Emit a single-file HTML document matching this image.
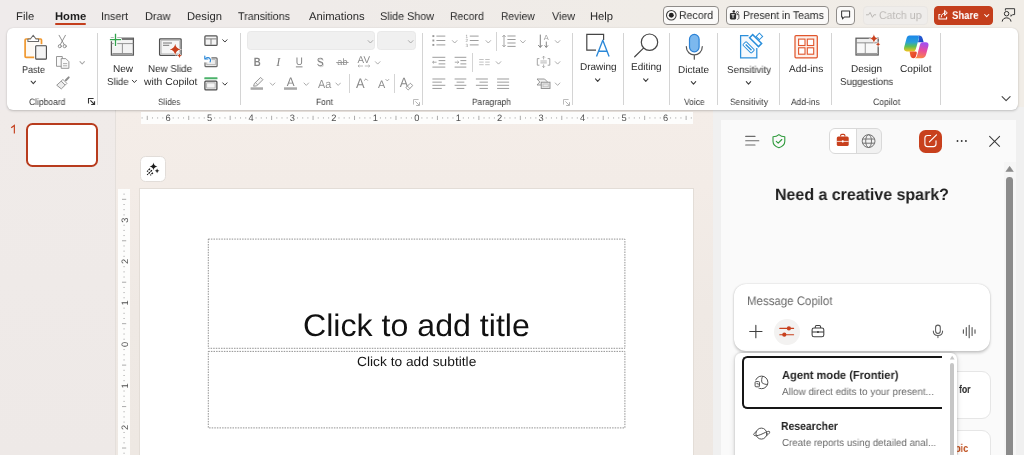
<!DOCTYPE html>
<html>
<head>
<meta charset="utf-8">
<title>PowerPoint</title>
<style>
*{box-sizing:border-box;margin:0;padding:0}
html,body{width:1024px;height:455px;overflow:hidden}
body{font-family:"Liberation Sans",sans-serif;color:#242424;position:relative;
 background:linear-gradient(90deg,#efebeb 0%,#efebe9 30%,#f0ece7 65%,#f1ede7 100%);}
.a{position:absolute}
.t{position:absolute;white-space:nowrap;line-height:1;transform-origin:0 0;will-change:transform;text-rendering:geometricPrecision}
svg text{text-rendering:geometricPrecision}
.sep{position:absolute;width:1px;background:#d6d6d6}
svg{position:absolute;overflow:visible;will-change:transform}
.btn{position:absolute;top:5.5px;height:19.5px;border:1px solid #8f8c89;border-radius:4px;background:#fbfaf9}
</style>
</head>
<body>

<!-- left pane tint + divider -->
<div class="a" style="left:0;top:110px;width:115px;height:345px;background:linear-gradient(180deg,#f0ebe9,#eee9e7)"></div>
<div class="a" style="left:115px;top:110px;width:909px;height:345px;background:linear-gradient(180deg,#f4ede8 0%,#f3ece7 22%,#efe9e4 58%,#eee8e3 100%)"></div>
<div class="a" style="left:115px;top:110px;width:1px;height:345px;background:#e4dfdb"></div>
<!-- task pane gutter -->
<div class="a" style="left:712.5px;top:107px;width:312px;height:348px;background:#f0f0f0"></div>
<!-- home underline -->
<div class="a" style="left:54.8px;top:23.4px;width:31px;height:1.8px;background:#c43e1c;border-radius:1px"></div>
<!-- title-bar buttons -->
<div class="btn" style="left:662.7px;width:56px"></div>
<div class="btn" style="left:725.8px;width:103.2px"></div>
<div class="btn" style="left:835.7px;width:19.6px"></div>
<div class="btn" style="left:862.5px;width:65px;border-color:#e9e6e3;background:#efedeb"></div>
<div class="btn" style="left:934.4px;width:58.6px;border-color:#c43e1c;background:#c43e1c"></div>

<div class="a" style="left:6.5px;top:28px;width:1011.7px;height:82px;background:#fff;border-radius:6px;box-shadow:0 1px 2.5px rgba(0,0,0,.20),0 0 1px rgba(0,0,0,.12)"></div>
<div class="a" style="left:247.2px;top:31.2px;width:128px;height:19.3px;background:#f0f0f0;border:1px solid #e9e9e9;border-radius:3.5px"></div>
<div class="a" style="left:377.3px;top:31.2px;width:38.4px;height:19.3px;background:#f0f0f0;border:1px solid #e9e9e9;border-radius:3.5px"></div>
<div class="sep" style="left:97.2px;top:32.5px;height:72.0px;background:#d4d4d4"></div>
<div class="sep" style="left:239.5px;top:32.5px;height:72.0px;background:#d4d4d4"></div>
<div class="sep" style="left:421.8px;top:32.5px;height:72.0px;background:#d4d4d4"></div>
<div class="sep" style="left:572.1px;top:32.5px;height:72.0px;background:#d4d4d4"></div>
<div class="sep" style="left:623.2px;top:32.5px;height:72.0px;background:#d4d4d4"></div>
<div class="sep" style="left:668.9px;top:32.5px;height:72.0px;background:#d4d4d4"></div>
<div class="sep" style="left:717.2px;top:32.5px;height:72.0px;background:#d4d4d4"></div>
<div class="sep" style="left:778.8px;top:32.5px;height:72.0px;background:#d4d4d4"></div>
<div class="sep" style="left:830.8px;top:32.5px;height:72.0px;background:#d4d4d4"></div>
<div class="sep" style="left:939.8px;top:32.5px;height:72.0px;background:#d4d4d4"></div>
<div class="sep" style="left:349.1px;top:74.2px;height:19.0px;background:#d4d4d4"></div>
<div class="sep" style="left:394.0px;top:74.2px;height:19.0px;background:#d4d4d4"></div>
<div class="sep" style="left:496.2px;top:31.5px;height:19.1px;background:#d4d4d4"></div>
<div class="sep" style="left:472.0px;top:52.8px;height:19.0px;background:#d4d4d4"></div>
<svg style="left:88.2px;top:98.3px" width="1" height="1"><path d="M0.5 5.6 V0.5 H5.6" fill="none" stroke="#333" stroke-width="1.08"/><path d="M2.4 2.4 L6.3 6.3 M6.5 3.2 V6.5 H3.2" fill="none" stroke="#333" stroke-width="1.2"/></svg>
<svg style="left:413px;top:98.5px" width="1" height="1"><path d="M0.5 5.6 V0.5 H5.6" fill="none" stroke="#b4b4b4" stroke-width="0.9"/><path d="M2.4 2.4 L6.3 6.3 M6.5 3.2 V6.5 H3.2" fill="none" stroke="#b4b4b4" stroke-width="1.0"/></svg>
<svg style="left:563px;top:98.5px" width="1" height="1"><path d="M0.5 5.6 V0.5 H5.6" fill="none" stroke="#b4b4b4" stroke-width="0.9"/><path d="M2.4 2.4 L6.3 6.3 M6.5 3.2 V6.5 H3.2" fill="none" stroke="#b4b4b4" stroke-width="1.0"/></svg>
<svg style="left:0;top:0" width="1024" height="112" viewBox="0 0 1024 112" font-family="Liberation Sans, sans-serif">
<g>
<rect x="25.1" y="39" width="16.4" height="18.4" rx="0.9" fill="#fdf9f4" stroke="#f0982f" stroke-width="1.7"/>
<path d="M27.9 41.4 V39 H30.4 L33.2 35.2 L36 39 H38.6 V41.4 Z" fill="#fff" stroke="#6a6a6a" stroke-width="1.05" stroke-linejoin="round"/>
<rect x="34.2" y="44.2" width="13.8" height="16.4" fill="#fff"/>
<rect x="35.7" y="45.8" width="10.7" height="13.3" rx="0.7" fill="#f4f4f4" stroke="#444" stroke-width="1.05"/>
</g>
<g fill="none" stroke="#8c8c8c" stroke-width="0.95" stroke-linecap="round">
<path d="M59.1 35.3 L64.3 44.8 M65.4 35.3 L60.2 44.8"/>
<circle cx="59.8" cy="46.2" r="1.55"/><circle cx="64.7" cy="46.2" r="1.55"/>
</g>
<g fill="#fafafa" stroke="#8c8c8c" stroke-width="0.9" stroke-linejoin="round">
<path d="M56.5 56.5 H62.3 V66.3 H56.5 Z"/>
<path d="M61.2 58.6 H65.8 L68.9 61.7 V68.3 H61.2 Z"/>
<path d="M63 63.6 H67.2 M63 65.8 H67.2" fill="none" stroke-width="0.7"/>
</g>
<g stroke="#8c8c8c" stroke-width="0.9" stroke-linejoin="round" fill="#ededed">
<path d="M68.7 77.4 L65.9 80.2" stroke-width="2" stroke-linecap="round"/>
<path d="M62.9 79.4 L66.9 83.4 L65.2 85.1 L61.2 81.1 Z" fill="#fff"/>
<path d="M61.2 81.1 L65.2 85.1 L61.3 88.9 L56.7 85.2 Z"/>
</g>
<g>
<rect x="111.4" y="38.2" width="22" height="16.9" fill="#f3f3f3" stroke="#5a5a5a" stroke-width="1.25"/>
<path d="M111.4 43.6 H133.4 M122.4 43.6 V53.4 M112.4 53.5 H132.4" fill="none" stroke="#8a8a8a" stroke-width="0.9"/>
<path d="M122 39.4 H133" fill="none" stroke="#6a6a6a" stroke-width="1"/>
<path d="M109.4 39.6 H121.6 M115.5 33.3 V46.4" fill="none" stroke="#fff" stroke-width="3.4"/>
<path d="M109.9 39.6 H121.1 M115.5 33.8 V45.9" fill="none" stroke="#31a24c" stroke-width="1.3"/>
</g>
<g>
<rect x="159.6" y="38.8" width="21.5" height="16.6" rx="0.8" fill="#f5f5f5" stroke="#505050" stroke-width="1.3"/>
<rect x="161.2" y="40.4" width="18.3" height="13.4" fill="none" stroke="#b5b5b5" stroke-width="0.7"/>
<path d="M163 43 H172 M163 45.3 H169.2" fill="none" stroke="#6a6a6a" stroke-width="0.9"/>
<path d="M175.20 42.50 Q176.03 48.57 182.10 49.40 Q176.03 50.23 175.20 56.30 Q174.37 50.23 168.30 49.40 Q174.37 48.57 175.20 42.50Z" fill="#fff"/>
<path d="M175.20 43.80 Q175.87 48.73 180.80 49.40 Q175.87 50.07 175.20 55.00 Q174.53 50.07 169.60 49.40 Q174.53 48.73 175.20 43.80Z" fill="#c8401d"/>
<path d="M179.50 52.30 Q179.90 55.20 182.80 55.60 Q179.90 56.00 179.50 58.90 Q179.10 56.00 176.20 55.60 Q179.10 55.20 179.50 52.30Z" fill="#fff"/>
<path d="M179.50 53.20 Q179.79 55.31 181.90 55.60 Q179.79 55.89 179.50 58.00 Q179.21 55.89 177.10 55.60 Q179.21 55.31 179.50 53.20Z" fill="#c8401d"/>
</g>
<g fill="none" stroke="#555" stroke-width="1.25">
<rect x="204.9" y="35.9" width="12.2" height="9.4" rx="0.9" fill="#f4f4f4"/>
<path d="M205.6 38.9 H216.4 M211 38.9 V44.7" stroke-width="0.9" stroke="#6f6f6f"/>
</g>
<g fill="none">
<rect x="205" y="57.8" width="12.1" height="8.8" rx="0.9" fill="#ededed" stroke="#6a6a6a" stroke-width="1.2"/>
<rect x="206.8" y="59.7" width="8.5" height="5" fill="none" stroke="#a5a5a5" stroke-width="0.7"/>
<path d="M203 55 H211.4 V62.4 H203 Z" fill="#fff" stroke="none"/>
<path d="M205.6 58.6 C207.2 56.9 209.8 57.2 210.4 59.6 C210.6 60.4 210.5 61.2 210.1 61.9" stroke="#2b88d8" stroke-width="1.15" stroke-linecap="round"/>
<path d="M204.8 56 V59 H207.8" stroke="#2b88d8" stroke-width="1.15" stroke-linecap="round" stroke-linejoin="round"/>
</g>
<g>
<rect x="204.3" y="77.3" width="13.2" height="1.9" rx="0.5" fill="#4cb26b"/>
<rect x="204.9" y="81.1" width="12" height="8.7" rx="0.9" fill="#f4f4f4" stroke="#4a4a4a" stroke-width="1.25"/>
<rect x="206.7" y="82.9" width="8.4" height="5.1" fill="none" stroke="#9a9a9a" stroke-width="0.7"/>
</g>
<g fill="#7f7f7f" text-anchor="middle">
<text x="257.2" y="65.6" font-size="12" font-weight="bold" fill="#858585" transform="translate(257.2 0) scale(0.8 1) translate(-257.2 0)">B</text>
<text x="278.2" y="65.6" font-size="12.4" font-style="italic" font-family="Liberation Serif, serif">I</text>
<text x="299.2" y="64.9" font-size="10.9" transform="translate(299.2 0) scale(0.9 1) translate(-299.2 0)">U</text>
<rect x="295.9" y="66.4" width="6.6" height="0.95"/>
<text x="320.9" y="66.5" font-size="12" fill="#d2d2d2" transform="translate(320.9 0) scale(0.85 1) translate(-320.9 0)">S</text>
<text x="320.2" y="65.7" font-size="12" transform="translate(320.2 0) scale(0.85 1) translate(-320.2 0)">S</text>
<text x="342.4" y="65.3" font-size="9.2" fill="#8f8f8f">ab</text>
<rect x="336.2" y="62" width="12.4" height="0.85" fill="#8f8f8f"/>
<text x="363.8" y="63" font-size="10" fill="#8a8a8a" textLength="12.4" lengthAdjust="spacingAndGlyphs">AV</text>
<path d="M358 66 H363 M359.4 64.8 L358 66 L359.4 67.2 M364.8 66 H369.8 M368.4 64.8 L369.8 66 L368.4 67.2" fill="none" stroke="#a0a0a0" stroke-width="0.7"/>
</g>
<g>
<path d="M260.6 77.4 L262.9 79.7 L256.7 85.9 L253.6 86.2 L254.3 83.6 Z" fill="#f6f6f6" stroke="#8c8c8c" stroke-width="0.9" stroke-linejoin="round"/>
<path d="M255.4 82.6 L257.7 84.9" stroke="#8c8c8c" stroke-width="0.8"/>
<rect x="250.6" y="87.3" width="12.4" height="2.5" fill="#a9a9a9"/>
</g>
<g>
<text x="290.75" y="86" font-size="12.3" text-anchor="middle" fill="#858585" transform="translate(290.75 0) scale(0.95 1) translate(-290.75 0)">A</text>
<rect x="284" y="87.3" width="13" height="2.5" fill="#a9a9a9"/>
<text x="324.65" y="87.9" font-size="11.8" text-anchor="middle" fill="#929292" textLength="13.2" lengthAdjust="spacingAndGlyphs">Aa</text>
<text x="360.2" y="87.9" font-size="13.9" text-anchor="middle" fill="#8a8a8a" transform="translate(360.2 0) scale(0.93 1) translate(-360.2 0)">A</text>
<path d="M364.2 80.6 L366 78.8 L367.8 80.6" fill="none" stroke="#8a8a8a" stroke-width="0.8"/>
<text x="381.6" y="87.9" font-size="10.8" text-anchor="middle" fill="#8a8a8a">A</text>
<path d="M385.6 79.2 L387.3 80.9 L389 79.2" fill="none" stroke="#8a8a8a" stroke-width="0.8"/>
<text x="404" y="87.1" font-size="13.5" text-anchor="middle" fill="#8a8a8a" transform="translate(404 0) scale(0.93 1) translate(-404 0)">A</text>
<g transform="rotate(-45 409.3 86.6)"><rect x="406.1" y="84.9" width="6.4" height="3.4" rx="0.6" fill="#fff" stroke="#8a8a8a" stroke-width="0.85"/><path d="M408.3 84.9 V88.3" stroke="#8a8a8a" stroke-width="0.7"/></g>
</g>
<g><rect x="432.4" y="35.15" width="1.9" height="1.9" fill="#979797"/><path d="M436.4 36.1 H445.3" stroke="#979797" stroke-width="0.95" fill="none"/><rect x="432.4" y="39.55" width="1.9" height="1.9" fill="#979797"/><path d="M436.4 40.5 H445.3" stroke="#979797" stroke-width="0.95" fill="none"/><rect x="432.4" y="43.949999999999996" width="1.9" height="1.9" fill="#979797"/><path d="M436.4 44.9 H445.3" stroke="#979797" stroke-width="0.95" fill="none"/><text x="466.9" y="37.7" font-size="4.6" text-anchor="middle" fill="#979797">1</text><path d="M469.8 36.1 H478.6" stroke="#979797" stroke-width="0.95" fill="none"/><text x="466.9" y="42.1" font-size="4.6" text-anchor="middle" fill="#979797">2</text><path d="M469.8 40.5 H478.6" stroke="#979797" stroke-width="0.95" fill="none"/><text x="466.9" y="46.5" font-size="4.6" text-anchor="middle" fill="#979797">3</text><path d="M469.8 44.9 H478.6" stroke="#979797" stroke-width="0.95" fill="none"/><path d="M507.4 36 H515.6" stroke="#979797" stroke-width="0.95" fill="none"/><path d="M507.4 39.5 H515.6" stroke="#979797" stroke-width="0.95" fill="none"/><path d="M507.4 43 H515.6" stroke="#979797" stroke-width="0.95" fill="none"/><path d="M507.4 46.4 H515.6" stroke="#979797" stroke-width="0.95" fill="none"/><path d="M504 35.2 V46.8 M502.4 37 L504 35.2 L505.6 37 M502.4 45 L504 46.8 L505.6 45" fill="none" stroke="#979797" stroke-width="0.85"/><path d="M540.3 34.6 V47.4 M538.2 45 L540.3 47.4 L542.4 45" fill="none" stroke="#7a7a7a" stroke-width="0.95"/><text x="546.3" y="40.4" font-size="7.4" text-anchor="middle" fill="#9a9a9a">A</text><path d="M546.3 41.6 V47.4 M544.5 45.4 L546.3 47.4 L548.1 45.4" fill="none" stroke="#7a7a7a" stroke-width="0.9"/><path d="M432.4 57.3 H445.3" stroke="#979797" stroke-width="0.95" fill="none"/><path d="M438.6 60.6 H445.3" stroke="#979797" stroke-width="0.95" fill="none"/><path d="M438.6 63.9 H445.3" stroke="#979797" stroke-width="0.95" fill="none"/><path d="M432.4 67.1 H445.3" stroke="#979797" stroke-width="0.95" fill="none"/><path d="M436.6 62.2 H432.6 M434 60.9 L432.6 62.2 L434 63.5" fill="none" stroke="#979797" stroke-width="0.8"/><path d="M454.6 57.3 H466.3" stroke="#979797" stroke-width="0.95" fill="none"/><path d="M460.4 60.6 H466.3" stroke="#979797" stroke-width="0.95" fill="none"/><path d="M460.4 63.9 H466.3" stroke="#979797" stroke-width="0.95" fill="none"/><path d="M454.6 67.1 H466.3" stroke="#979797" stroke-width="0.95" fill="none"/><path d="M454.8 62.2 H458.8 M457.4 60.9 L458.8 62.2 L457.4 63.5" fill="none" stroke="#979797" stroke-width="0.8"/><path d="M479.2 59.5 H483.7" stroke="#b2b2b2" stroke-width="0.8" fill="none"/><path d="M485.2 59.5 H489.7" stroke="#b2b2b2" stroke-width="0.8" fill="none"/><path d="M479.2 62.1 H483.7" stroke="#b2b2b2" stroke-width="0.8" fill="none"/><path d="M485.2 62.1 H489.7" stroke="#b2b2b2" stroke-width="0.8" fill="none"/><path d="M479.2 64.7 H483.7" stroke="#b2b2b2" stroke-width="0.8" fill="none"/><path d="M485.2 64.7 H489.7" stroke="#b2b2b2" stroke-width="0.8" fill="none"/><path d="M539.4 58.6 H537.3 V65.2 H539.4 M547.7 58.6 H549.8 V65.2 H547.7" fill="none" stroke="#9a9a9a" stroke-width="0.9"/><path d="M540.4 61 H546.8" stroke="#a5a5a5" stroke-width="0.8" fill="none"/><path d="M540.4 62.9 H546.8" stroke="#a5a5a5" stroke-width="0.8" fill="none"/><path d="M543.6 59.4 V56.3 M542.3 57.5 L543.6 56.2 L544.9 57.5 M543.6 64.4 V67.5 M542.3 66.3 L543.6 67.6 L544.9 66.3" fill="none" stroke="#9a9a9a" stroke-width="0.75"/><path d="M432.4 79 H445.3" stroke="#979797" stroke-width="0.95" fill="none"/><path d="M454.6 79 H466.3" stroke="#979797" stroke-width="0.95" fill="none"/><path d="M475.9 79 H487.9" stroke="#979797" stroke-width="0.95" fill="none"/><path d="M497.1 79 H509.1" stroke="#979797" stroke-width="0.95" fill="none"/><path d="M432.4 82.15 H441.8" stroke="#979797" stroke-width="0.95" fill="none"/><path d="M456.6 82.15 H464.3" stroke="#979797" stroke-width="0.95" fill="none"/><path d="M479.5 82.15 H487.9" stroke="#979797" stroke-width="0.95" fill="none"/><path d="M497.1 82.15 H509.1" stroke="#979797" stroke-width="0.95" fill="none"/><path d="M432.4 85.3 H445.3" stroke="#979797" stroke-width="0.95" fill="none"/><path d="M454.6 85.3 H466.3" stroke="#979797" stroke-width="0.95" fill="none"/><path d="M475.9 85.3 H487.9" stroke="#979797" stroke-width="0.95" fill="none"/><path d="M497.1 85.3 H509.1" stroke="#979797" stroke-width="0.95" fill="none"/><path d="M432.4 88.45 H441.8" stroke="#979797" stroke-width="0.95" fill="none"/><path d="M456.6 88.45 H464.3" stroke="#979797" stroke-width="0.95" fill="none"/><path d="M479.5 88.45 H487.9" stroke="#979797" stroke-width="0.95" fill="none"/><path d="M497.1 88.45 H509.1" stroke="#979797" stroke-width="0.95" fill="none"/><path d="M537 79 H544.6 L547.6 82 L544.6 85 H537 L539.8 82 Z" fill="#f0f0f0" stroke="#8a8a8a" stroke-width="0.85" stroke-linejoin="round"/><rect x="541.2" y="82.2" width="8.8" height="6.3" fill="#e9e9e9" stroke="#8a8a8a" stroke-width="0.9"/><rect x="543" y="84" width="5.2" height="2.8" fill="none" stroke="#b0b0b0" stroke-width="0.6"/></g>
</svg>
<svg style="left:0;top:0" width="1" height="1"><path d="M80.00 61.60 L82.20 64.00 L84.40 61.60" fill="none" stroke="#a8a8a8" stroke-width="1.1" stroke-linecap="round" stroke-linejoin="round"/></svg>
<svg style="left:0;top:0" width="1" height="1"><path d="M31.10 81.20 L33.30 83.60 L35.50 81.20" fill="none" stroke="#3d3d3d" stroke-width="1.05" stroke-linecap="round" stroke-linejoin="round"/></svg>
<svg style="left:0;top:0" width="1" height="1"><path d="M132.30 80.25 L134.40 82.55 L136.50 80.25" fill="none" stroke="#3d3d3d" stroke-width="1.0" stroke-linecap="round" stroke-linejoin="round"/></svg>
<svg style="left:0;top:0" width="1" height="1"><path d="M222.75 39.75 L224.90 42.05 L227.05 39.75" fill="none" stroke="#3d3d3d" stroke-width="1.0" stroke-linecap="round" stroke-linejoin="round"/></svg>
<svg style="left:0;top:0" width="1" height="1"><path d="M222.75 82.85 L224.90 85.15 L227.05 82.85" fill="none" stroke="#3d3d3d" stroke-width="1.0" stroke-linecap="round" stroke-linejoin="round"/></svg>
<svg style="left:0;top:0" width="1" height="1"><path d="M368.10 40.60 L370.40 43.00 L372.70 40.60" fill="none" stroke="#9e9e9e" stroke-width="0.85" stroke-linecap="round" stroke-linejoin="round"/></svg>
<svg style="left:0;top:0" width="1" height="1"><path d="M408.40 40.60 L410.70 43.00 L413.00 40.60" fill="none" stroke="#9e9e9e" stroke-width="0.85" stroke-linecap="round" stroke-linejoin="round"/></svg>
<svg style="left:0;top:0" width="1" height="1"><path d="M375.40 61.70 L377.70 64.10 L380.00 61.70" fill="none" stroke="#9e9e9e" stroke-width="0.85" stroke-linecap="round" stroke-linejoin="round"/></svg>
<svg style="left:0;top:0" width="1" height="1"><path d="M270.30 83.00 L272.60 85.40 L274.90 83.00" fill="none" stroke="#9e9e9e" stroke-width="0.85" stroke-linecap="round" stroke-linejoin="round"/></svg>
<svg style="left:0;top:0" width="1" height="1"><path d="M304.00 83.00 L306.30 85.40 L308.60 83.00" fill="none" stroke="#9e9e9e" stroke-width="0.85" stroke-linecap="round" stroke-linejoin="round"/></svg>
<svg style="left:0;top:0" width="1" height="1"><path d="M335.90 83.00 L338.20 85.40 L340.50 83.00" fill="none" stroke="#9e9e9e" stroke-width="0.85" stroke-linecap="round" stroke-linejoin="round"/></svg>
<svg style="left:0;top:0" width="1" height="1"><path d="M452.40 40.60 L454.70 43.00 L457.00 40.60" fill="none" stroke="#9e9e9e" stroke-width="0.85" stroke-linecap="round" stroke-linejoin="round"/></svg>
<svg style="left:0;top:0" width="1" height="1"><path d="M486.00 40.60 L488.30 43.00 L490.60 40.60" fill="none" stroke="#9e9e9e" stroke-width="0.85" stroke-linecap="round" stroke-linejoin="round"/></svg>
<svg style="left:0;top:0" width="1" height="1"><path d="M520.60 40.60 L522.90 43.00 L525.20 40.60" fill="none" stroke="#9e9e9e" stroke-width="0.85" stroke-linecap="round" stroke-linejoin="round"/></svg>
<svg style="left:0;top:0" width="1" height="1"><path d="M555.30 40.60 L557.60 43.00 L559.90 40.60" fill="none" stroke="#9e9e9e" stroke-width="0.85" stroke-linecap="round" stroke-linejoin="round"/></svg>
<svg style="left:0;top:0" width="1" height="1"><path d="M496.20 61.70 L498.50 64.10 L500.80 61.70" fill="none" stroke="#9e9e9e" stroke-width="0.85" stroke-linecap="round" stroke-linejoin="round"/></svg>
<svg style="left:0;top:0" width="1" height="1"><path d="M555.30 61.70 L557.60 64.10 L559.90 61.70" fill="none" stroke="#9e9e9e" stroke-width="0.85" stroke-linecap="round" stroke-linejoin="round"/></svg>
<svg style="left:0;top:0" width="1" height="1"><path d="M555.30 83.00 L557.60 85.40 L559.90 83.00" fill="none" stroke="#9e9e9e" stroke-width="0.85" stroke-linecap="round" stroke-linejoin="round"/></svg>
<svg style="left:0;top:0" width="1024" height="112" viewBox="0 0 1024 112" font-family="Liberation Sans, sans-serif">
<defs>
<linearGradient id="cpL" x1="0" y1="0" x2="0" y2="1"><stop offset="0" stop-color="#1b86ea"/><stop offset="0.42" stop-color="#29a0d8"/><stop offset="0.68" stop-color="#5bbf56"/><stop offset="1" stop-color="#f6c51c"/></linearGradient>
<linearGradient id="cpR" x1="0.3" y1="0" x2="0.1" y2="1"><stop offset="0" stop-color="#a44fee"/><stop offset="0.45" stop-color="#e84c9c"/><stop offset="1" stop-color="#fd8e3a"/></linearGradient>
<linearGradient id="cpB" x1="0" y1="0" x2="1" y2="1"><stop offset="0" stop-color="#2a6fe0"/><stop offset="1" stop-color="#1a3fc0"/></linearGradient>
<linearGradient id="cpO" x1="0" y1="0" x2="1" y2="1"><stop offset="0" stop-color="#f0662c"/><stop offset="1" stop-color="#e3372c"/></linearGradient>
</defs>
<g fill="none">
<path d="M596 50.1 H586.8 V34.3 H603.6 V40" stroke="#454545" stroke-width="1.2"/>
<path d="M596.5 56.4 L602.8 40.2 L609.1 56.4 M598.5 51.2 H607.1" stroke="#2b88d8" stroke-width="1.35" stroke-linejoin="round"/>
</g>
<g fill="none" stroke="#454545" stroke-width="1.2" stroke-linecap="round">
<circle cx="649.5" cy="42.2" r="8.2"/><path d="M643.5 48.1 L634.7 56.8"/>
</g>
<g fill="none">
<rect x="689.5" y="34.4" width="9.6" height="17.4" rx="4.8" fill="#7cb8ee" stroke="#2b82d6" stroke-width="1.2"/>
<path d="M686.3 46.6 C686.3 57.6 702.3 57.6 702.3 46.6 M694.3 55 V59.2" stroke="#555" stroke-width="1.2" stroke-linecap="round"/>
</g>
<g fill="none" stroke="#2b8fdb">
<path d="M748.5 35.6 H740.6 V57.8 H756.8 V48" stroke-width="1.25" fill="#f5f9fd"/>
<g transform="rotate(45 748.6 47.4)"><rect x="742.6" y="45" width="12" height="4.8" rx="0.9" fill="#fff" stroke-width="0.95"/><rect x="744.5" y="46.7" width="8.2" height="1.4" fill="#2b8fdb" stroke="none"/></g>
<g transform="rotate(45 755.6 40.6)"><rect x="749.3" y="38.4" width="12.6" height="4.4" fill="#fff" stroke-width="1.5"/></g>
<g transform="rotate(45 759.4 36.4)"><rect x="757.1" y="34.1" width="4.6" height="4.6" fill="#fff" stroke-width="1.0"/></g>
</g>
<g stroke="#e1562c" stroke-width="1.1">
<rect x="795" y="35.5" width="22.3" height="22.3" rx="1" fill="#fdf1ec" stroke-width="1.25"/>
<rect x="798.6" y="39.1" width="6.4" height="6.4" fill="#fff"/><rect x="807.3" y="39.1" width="6.4" height="6.4" fill="#fff"/>
<rect x="798.6" y="47.8" width="6.4" height="6.4" fill="#fff"/><rect x="807.3" y="47.8" width="6.4" height="6.4" fill="#fff"/>
</g>
<g>
<rect x="856" y="38.2" width="22.2" height="16.8" fill="#efefef" stroke="#5c5c5c" stroke-width="1.25"/>
<path d="M856 42.8 H878 M865.2 42.8 V53.6 M857 53.6 H877" fill="none" stroke="#8a8a8a" stroke-width="0.9"/>
<path d="M857.3 44 H864.4 V52.8 H857.3Z M866 44 H877 V52.8 H866Z" fill="#f8f8f8" stroke="none"/>
<path d="M873.90 33.00 Q874.57 37.93 879.50 38.60 Q874.57 39.27 873.90 44.20 Q873.23 39.27 868.30 38.60 Q873.23 37.93 873.90 33.00Z" fill="#fff"/><path d="M873.90 34.20 Q874.43 38.07 878.30 38.60 Q874.43 39.13 873.90 43.00 Q873.37 39.13 869.50 38.60 Q873.37 38.07 873.90 34.20Z" fill="#c8401d"/>
<path d="M878.10 41.20 Q878.47 43.93 881.20 44.30 Q878.47 44.67 878.10 47.40 Q877.73 44.67 875.00 44.30 Q877.73 43.93 878.10 41.20Z" fill="#fff"/><path d="M878.10 42.10 Q878.36 44.04 880.30 44.30 Q878.36 44.56 878.10 46.50 Q877.84 44.56 875.90 44.30 Q877.84 44.04 878.10 42.10Z" fill="#c8401d"/>
</g>
<g>
<path d="M915 35.5 H919.2 C920.9 35.5 922 36.5 922.5 38.2 L923.7 42.3 H918 L918.9 38.4 C919.3 36.5 918.5 35.5 916.8 35.5 Z" fill="url(#cpB)"/>
<path d="M909.4 35.5 H916.8 C918.6 35.5 919.3 36.6 918.8 38.4 L916 48.4 C915.4 50.6 914.2 51.5 912.2 51.5 H906.8 C904.5 51.5 903.5 49.9 904.1 47.6 L906.5 38.4 C907 36.5 908 35.5 909.4 35.5 Z" fill="url(#cpL)"/>
<path d="M909.6 51.5 H915.4 C916.6 51.5 917 52.2 916.7 53.4 L916 56 C915.6 57.5 914.6 58.2 913.4 58.2 C911.8 58.2 910.8 57.4 910.4 55.8 Z" fill="url(#cpO)"/>
<path d="M922.4 42.2 H925.8 C928 42.2 929 43.8 928.4 46 L926 54.8 C925.4 57.1 923.9 58.2 921.6 58.2 H914 C915.7 58.2 916.6 57.3 917.1 55.4 L919.9 45 C920.4 43.1 921.2 42.2 922.4 42.2 Z" fill="url(#cpR)"/>
</g>
<path d="M1002.1 96.7 L1006.1 100.7 L1010.1 96.7" fill="none" stroke="#444" stroke-width="1.1" stroke-linecap="round" stroke-linejoin="round"/>
<g fill="none">
<circle cx="671.3" cy="15.2" r="4.8" stroke="#3a3a3a" stroke-width="1.05"/><circle cx="671.3" cy="15.2" r="2.45" fill="#222"/>
<!-- teams -->
<rect x="729.9" y="13" width="6.2" height="6.4" rx="1.1" fill="#2d2d2d"/>
<path d="M731.4 14.7 H734.6 M733 14.7 V18.1" stroke="#fff" stroke-width="0.9"/>
<circle cx="733.8" cy="11.6" r="1.25" fill="#2d2d2d"/>
<circle cx="737.5" cy="12.5" r="1.05" stroke="#3a3a3a" stroke-width="0.8"/>
<path d="M736.6 14.6 H738.9 V17.8 C738.9 18.8 738.1 19.4 737.2 19.4" stroke="#3a3a3a" stroke-width="0.85"/>
<!-- comment -->
<path d="M841.6 11 H849.6 V17 H844.4 L842.5 18.9 V17 H841.6 Z" stroke="#3a3a3a" stroke-width="1.05" stroke-linejoin="round"/>
<!-- pulse -->
<path d="M866.4 14.8 H868.6 L870.1 12.4 L872.4 17.3 L873.9 14.8 H875.7" stroke="#b9b6b3" stroke-width="0.95" stroke-linejoin="round" stroke-linecap="round"/>
<!-- share -->
<path d="M940.4 14.4 H938.9 V19 H946.6 V16.8" stroke="#fff" stroke-width="1.05" stroke-linejoin="round"/>
<path d="M941.2 17 C941.4 14.4 943 13 945.3 12.9 M944.9 10.6 L947.3 12.9 L944.9 15.2 Z" stroke="#fff" stroke-width="1" stroke-linejoin="round" stroke-linecap="round"/>
<path d="M984.6 14.5 L986.7 16.6 L988.8 14.5" stroke="#fff" stroke-width="1.05" stroke-linecap="round" stroke-linejoin="round"/>
<!-- person w/ bubble -->
<path d="M1005.4 10.6 V8.7 H1014.6 V14.6 H1012.6 L1011 16.3 V14.6" stroke="#3a3a3a" stroke-width="1" stroke-linejoin="round"/>
<circle cx="1006.6" cy="13.7" r="2.25" stroke="#2d2d2d" stroke-width="1" fill="#f1ede8"/>
<path d="M1002.2 21.6 C1002.4 16.6 1010.8 16.6 1011 21.6" stroke="#2d2d2d" stroke-width="1"/>
</g>
</svg>
<svg style="left:0;top:0" width="1" height="1"><path d="M595.50 78.90 L597.70 81.30 L599.90 78.90" fill="none" stroke="#3d3d3d" stroke-width="1.1" stroke-linecap="round" stroke-linejoin="round"/></svg>
<svg style="left:0;top:0" width="1" height="1"><path d="M643.60 78.90 L645.80 81.30 L648.00 78.90" fill="none" stroke="#3d3d3d" stroke-width="1.1" stroke-linecap="round" stroke-linejoin="round"/></svg>
<svg style="left:0;top:0" width="1" height="1"><path d="M691.30 81.70 L693.50 84.10 L695.70 81.70" fill="none" stroke="#3d3d3d" stroke-width="1.1" stroke-linecap="round" stroke-linejoin="round"/></svg>
<svg style="left:0;top:0" width="1" height="1"><path d="M746.30 81.70 L748.50 84.10 L750.70 81.70" fill="none" stroke="#3d3d3d" stroke-width="1.1" stroke-linecap="round" stroke-linejoin="round"/></svg>

<!-- thumbnail -->
<div class="a" style="left:26.1px;top:123px;width:72.4px;height:44.1px;border:2.8px solid #b83c1e;border-radius:6.5px;background:#fff"></div>
<svg style="left:0;top:0" width="1" height="1"><path d="M11.2 127.8 L14.35 125.5 V133.6" fill="none" stroke="#c43e1c" stroke-width="1.15" stroke-linejoin="miter"/></svg>
<!-- rulers -->
<div class="a" style="left:140.6px;top:112px;width:552.4px;height:12px;background:#fdfdfc"></div>
<div class="a" style="left:117.7px;top:188.6px;width:12.4px;height:267px;background:#fdfdfc"></div>
<!-- designer button -->
<div class="a" style="left:140.4px;top:156.4px;width:25.3px;height:25.3px;background:#fff;border:1px solid #e2ddd9;border-radius:5.5px"></div>
<!-- slide -->
<div class="a" style="left:139.3px;top:187.8px;width:554.7px;height:270px;background:#fff;border:1px solid #e3ddd7"></div>
<svg style="left:0;top:0" width="1" height="1"><rect x="208.3" y="239.1" width="416.6" height="109.2" fill="none" stroke="#7e7e7e" stroke-width="0.85" stroke-dasharray="1.5 1.1"/><rect x="208.3" y="351.4" width="416.6" height="76.5" fill="none" stroke="#7e7e7e" stroke-width="0.85" stroke-dasharray="1.5 1.1"/></svg>
<svg style="left:0;top:0" width="1024" height="455" viewBox="0 0 1024 455" font-family="Liberation Sans, sans-serif">
<path d="M147.27 115.8 V120 M188.72 115.8 V120 M230.17 115.8 V120 M271.62 115.8 V120 M313.07 115.8 V120 M354.52 115.8 V120 M395.97 115.8 V120 M437.43 115.8 V120 M478.88 115.8 V120 M520.33 115.8 V120 M561.77 115.8 V120 M603.23 115.8 V120 M644.67 115.8 V120 M686.12 115.8 V120 " stroke="#a2a2a2" stroke-width="0.9" fill="none"/><path d="M142.09 117 V118.8 M152.46 117 V118.8 M157.64 117 V118.8 M162.82 117 V118.8 M173.18 117 V118.8 M178.36 117 V118.8 M183.54 117 V118.8 M193.91 117 V118.8 M199.09 117 V118.8 M204.27 117 V118.8 M214.63 117 V118.8 M219.81 117 V118.8 M224.99 117 V118.8 M235.36 117 V118.8 M240.54 117 V118.8 M245.72 117 V118.8 M256.08 117 V118.8 M261.26 117 V118.8 M266.44 117 V118.8 M276.81 117 V118.8 M281.99 117 V118.8 M287.17 117 V118.8 M297.53 117 V118.8 M302.71 117 V118.8 M307.89 117 V118.8 M318.26 117 V118.8 M323.44 117 V118.8 M328.62 117 V118.8 M338.98 117 V118.8 M344.16 117 V118.8 M349.34 117 V118.8 M359.71 117 V118.8 M364.89 117 V118.8 M370.07 117 V118.8 M380.43 117 V118.8 M385.61 117 V118.8 M390.79 117 V118.8 M401.16 117 V118.8 M406.34 117 V118.8 M411.52 117 V118.8 M421.88 117 V118.8 M427.06 117 V118.8 M432.24 117 V118.8 M442.61 117 V118.8 M447.79 117 V118.8 M452.97 117 V118.8 M463.33 117 V118.8 M468.51 117 V118.8 M473.69 117 V118.8 M484.06 117 V118.8 M489.24 117 V118.8 M494.42 117 V118.8 M504.78 117 V118.8 M509.96 117 V118.8 M515.14 117 V118.8 M525.51 117 V118.8 M530.69 117 V118.8 M535.87 117 V118.8 M546.23 117 V118.8 M551.41 117 V118.8 M556.59 117 V118.8 M566.96 117 V118.8 M572.14 117 V118.8 M577.32 117 V118.8 M587.68 117 V118.8 M592.86 117 V118.8 M598.04 117 V118.8 M608.41 117 V118.8 M613.59 117 V118.8 M618.77 117 V118.8 M629.13 117 V118.8 M634.31 117 V118.8 M639.49 117 V118.8 M649.86 117 V118.8 M655.04 117 V118.8 M660.22 117 V118.8 M670.58 117 V118.8 M675.76 117 V118.8 M680.94 117 V118.8 M691.31 117 V118.8 " stroke="#c2c2c2" stroke-width="0.9" fill="none"/><text x="168.10" y="121.3" font-size="9.3" text-anchor="middle" fill="#505050">6</text><text x="209.55" y="121.3" font-size="9.3" text-anchor="middle" fill="#505050">5</text><text x="251.00" y="121.3" font-size="9.3" text-anchor="middle" fill="#505050">4</text><text x="292.45" y="121.3" font-size="9.3" text-anchor="middle" fill="#505050">3</text><text x="333.90" y="121.3" font-size="9.3" text-anchor="middle" fill="#505050">2</text><text x="375.35" y="121.3" font-size="9.3" text-anchor="middle" fill="#505050">1</text><text x="416.80" y="121.3" font-size="9.3" text-anchor="middle" fill="#505050">0</text><text x="458.25" y="121.3" font-size="9.3" text-anchor="middle" fill="#505050">1</text><text x="499.70" y="121.3" font-size="9.3" text-anchor="middle" fill="#505050">2</text><text x="541.15" y="121.3" font-size="9.3" text-anchor="middle" fill="#505050">3</text><text x="582.60" y="121.3" font-size="9.3" text-anchor="middle" fill="#505050">4</text><text x="624.05" y="121.3" font-size="9.3" text-anchor="middle" fill="#505050">5</text><text x="665.50" y="121.3" font-size="9.3" text-anchor="middle" fill="#505050">6</text>
<path d="M122 199.32 H126.2 M122 240.77 H126.2 M122 282.22 H126.2 M122 323.67 H126.2 M122 365.12 H126.2 M122 406.57 H126.2 M122 448.02 H126.2 " stroke="#a2a2a2" stroke-width="0.9" fill="none"/><path d="M123.2 194.14 H125 M123.2 204.51 H125 M123.2 209.69 H125 M123.2 214.87 H125 M123.2 225.23 H125 M123.2 230.41 H125 M123.2 235.59 H125 M123.2 245.96 H125 M123.2 251.14 H125 M123.2 256.32 H125 M123.2 266.68 H125 M123.2 271.86 H125 M123.2 277.04 H125 M123.2 287.41 H125 M123.2 292.59 H125 M123.2 297.77 H125 M123.2 308.13 H125 M123.2 313.31 H125 M123.2 318.49 H125 M123.2 328.86 H125 M123.2 334.04 H125 M123.2 339.22 H125 M123.2 349.58 H125 M123.2 354.76 H125 M123.2 359.94 H125 M123.2 370.31 H125 M123.2 375.49 H125 M123.2 380.67 H125 M123.2 391.03 H125 M123.2 396.21 H125 M123.2 401.39 H125 M123.2 411.76 H125 M123.2 416.94 H125 M123.2 422.12 H125 M123.2 432.48 H125 M123.2 437.66 H125 M123.2 442.84 H125 M123.2 453.21 H125 " stroke="#c2c2c2" stroke-width="0.9" fill="none"/><text transform="translate(127.8 220.05) rotate(-90)" font-size="9.3" text-anchor="middle" fill="#505050">3</text><text transform="translate(127.8 261.50) rotate(-90)" font-size="9.3" text-anchor="middle" fill="#505050">2</text><text transform="translate(127.8 302.95) rotate(-90)" font-size="9.3" text-anchor="middle" fill="#505050">1</text><text transform="translate(127.8 344.40) rotate(-90)" font-size="9.3" text-anchor="middle" fill="#505050">0</text><text transform="translate(127.8 385.85) rotate(-90)" font-size="9.3" text-anchor="middle" fill="#505050">1</text><text transform="translate(127.8 427.30) rotate(-90)" font-size="9.3" text-anchor="middle" fill="#505050">2</text>
<path d="M153.50 162.50 Q153.89 166.01 157.40 166.40 Q153.89 166.79 153.50 170.30 Q153.11 166.79 149.60 166.40 Q153.11 166.01 153.50 162.50Z" fill="#1a1a1a"/><path d="M157.10 168.40 Q157.34 170.56 159.50 170.80 Q157.34 171.04 157.10 173.20 Q156.86 171.04 154.70 170.80 Q156.86 170.56 157.10 168.40Z" fill="#1a1a1a"/><path d="M150 168.6 L147.1 171.6 M151.9 170.2 L147.2 174.9 M152.9 172.7 L150.3 175.3" stroke="#111" stroke-width="1.3" stroke-dasharray="2 0.8" fill="none"/>
</svg>
<div class="t" style="left:16.48px;top:12.09px;font-size:11.24px;color:#2a2a2a;transform:scaleX(1.0031);">File</div>
<div class="t" style="left:101.06px;top:12.09px;font-size:11.24px;color:#2a2a2a;transform:scaleX(0.9621);">Insert</div>
<div class="t" style="left:145.10px;top:12.09px;font-size:11.24px;color:#2a2a2a;transform:scaleX(0.9759);">Draw</div>
<div class="t" style="left:186.58px;top:12.09px;font-size:11.24px;color:#2a2a2a;transform:scaleX(0.9973);">Design</div>
<div class="t" style="left:238.02px;top:12.09px;font-size:11.24px;color:#2a2a2a;transform:scaleX(0.9511);">Transitions</div>
<div class="t" style="left:308.50px;top:12.09px;font-size:11.24px;color:#2a2a2a;transform:scaleX(0.9928);">Animations</div>
<div class="t" style="left:379.72px;top:12.09px;font-size:11.24px;color:#2a2a2a;transform:scaleX(0.9645);">Slide Show</div>
<div class="t" style="left:450.17px;top:12.09px;font-size:11.24px;color:#2a2a2a;transform:scaleX(0.9336);">Record</div>
<div class="t" style="left:501.16px;top:12.09px;font-size:11.24px;color:#2a2a2a;transform:scaleX(0.9147);">Review</div>
<div class="t" style="left:552.00px;top:12.09px;font-size:11.24px;color:#2a2a2a;transform:scaleX(0.9572);">View</div>
<div class="t" style="left:590.08px;top:12.09px;font-size:11.24px;color:#2a2a2a;transform:scaleX(0.9964);">Help</div>
<div class="t" style="left:55.05px;top:12.09px;font-size:11.24px;color:#1c1c1c;font-weight:bold;transform:scaleX(0.9917);">Home</div>
<div class="t" style="left:679.13px;top:10.69px;font-size:11.24px;color:#2a2a2a;transform:scaleX(0.9407);">Record</div>
<div class="t" style="left:742.91px;top:10.69px;font-size:11.24px;color:#2a2a2a;transform:scaleX(0.9340);">Present in Teams</div>
<div class="t" style="left:878.82px;top:10.69px;font-size:11.24px;color:#bdbab7;transform:scaleX(0.9465);">Catch up</div>
<div class="t" style="left:952.00px;top:10.69px;font-size:11.24px;color:#ffffff;font-weight:bold;transform:scaleX(0.8484);">Share</div>
<div class="t" style="left:21.80px;top:66.14px;font-size:9.99px;color:#2b2b2b;transform:scaleX(0.8980);">Paste</div>
<div class="t" style="left:112.98px;top:65.29px;font-size:9.99px;color:#2b2b2b;transform:scaleX(1.0084);">New</div>
<div class="t" style="left:107.01px;top:77.64px;font-size:9.99px;color:#2b2b2b;transform:scaleX(0.9719);">Slide</div>
<div class="t" style="left:147.71px;top:65.29px;font-size:9.99px;color:#2b2b2b;transform:scaleX(0.9810);">New Slide</div>
<div class="t" style="left:144.20px;top:77.64px;font-size:9.99px;color:#2b2b2b;transform:scaleX(1.0333);">with Copilot</div>
<div class="t" style="left:579.60px;top:62.84px;font-size:9.99px;color:#2b2b2b;transform:scaleX(0.9918);">Drawing</div>
<div class="t" style="left:630.99px;top:62.84px;font-size:9.99px;color:#2b2b2b;transform:scaleX(0.9970);">Editing</div>
<div class="t" style="left:678.00px;top:65.64px;font-size:9.99px;color:#2b2b2b;transform:scaleX(0.9905);">Dictate</div>
<div class="t" style="left:726.81px;top:65.64px;font-size:9.99px;color:#2b2b2b;transform:scaleX(0.9820);">Sensitivity</div>
<div class="t" style="left:789.40px;top:65.34px;font-size:9.99px;color:#2b2b2b;transform:scaleX(1.0097);">Add-ins</div>
<div class="t" style="left:851.40px;top:65.34px;font-size:9.99px;color:#2b2b2b;transform:scaleX(0.9936);">Design</div>
<div class="t" style="left:840.22px;top:77.64px;font-size:9.99px;color:#2b2b2b;transform:scaleX(0.9705);">Suggestions</div>
<div class="t" style="left:900.00px;top:65.34px;font-size:9.99px;color:#2b2b2b;transform:scaleX(1.0161);">Copilot</div>
<div class="t" style="left:29.48px;top:97.75px;font-size:9.16px;color:#3a3a3a;transform:scaleX(0.9295);">Clipboard</div>
<div class="t" style="left:157.85px;top:97.75px;font-size:9.16px;color:#3a3a3a;transform:scaleX(0.8979);">Slides</div>
<div class="t" style="left:316.31px;top:97.75px;font-size:9.16px;color:#3a3a3a;transform:scaleX(0.9212);">Font</div>
<div class="t" style="left:471.70px;top:97.75px;font-size:9.16px;color:#3a3a3a;transform:scaleX(0.9108);">Paragraph</div>
<div class="t" style="left:683.58px;top:97.75px;font-size:9.16px;color:#3a3a3a;transform:scaleX(0.9227);">Voice</div>
<div class="t" style="left:730.07px;top:97.75px;font-size:9.16px;color:#3a3a3a;transform:scaleX(0.9192);">Sensitivity</div>
<div class="t" style="left:791.04px;top:97.75px;font-size:9.16px;color:#3a3a3a;transform:scaleX(0.9226);">Add-ins</div>
<div class="t" style="left:872.81px;top:97.75px;font-size:9.16px;color:#3a3a3a;transform:scaleX(0.9489);">Copilot</div>
<div class="t" style="left:302.74px;top:309.97px;font-size:31.22px;color:#111111;transform:scaleX(1.0295);">Click to add title</div>
<div class="t" style="left:357.08px;top:355.41px;font-size:13.22px;color:#161616;transform:scaleX(1.0407);">Click to add subtitle</div>
<div class="a" style="left:721.2px;top:120px;width:294.6px;height:335px;background:#fafafa"></div>
<!-- scrollbar -->
<div class="a" style="left:1003.8px;top:162px;width:12px;height:293px;background:#f6f6f6"></div>
<div class="a" style="left:1006.1px;top:177px;width:6.8px;height:290px;background:#8b8b8b;border-radius:3.4px"></div>
<svg style="left:0;top:0" width="1" height="1"><path d="M1009.6 166.3 L1013.3 171.6 H1005.9 Z" fill="#8b8b8b" stroke="#8b8b8b" stroke-width="0.6" stroke-linejoin="round"/></svg>
<!-- mode toggle -->
<div class="a" style="left:829.2px;top:128.3px;width:52.4px;height:25.6px;border:1px solid #d9d9d9;border-radius:6px;background:linear-gradient(90deg,#fff 0,#fff 26px,#d9d9d9 26px,#d9d9d9 27px,#f1f1f1 27px)"></div>
<!-- new chat -->
<div class="a" style="left:919px;top:129.5px;width:23px;height:23px;background:#c8401d;border-radius:6.5px"></div>
<!-- message box -->
<div class="a" style="left:733.9px;top:283.9px;width:256.6px;height:67.1px;background:#fff;border-radius:12px;box-shadow:0 1.5px 3px rgba(0,0,0,.20),0 0 1.5px rgba(0,0,0,.14)"></div>
<div class="a" style="left:773.8px;top:318.9px;width:25.8px;height:25.8px;border-radius:50%;background:#f3f2f1"></div>
<!-- suggestion cards (behind dropdown) -->
<div class="a" style="left:800px;top:371.2px;width:190.5px;height:47.4px;background:#fff;border:1px solid #e6e6e6;border-radius:9px"></div>
<div class="a" style="left:800px;top:430.1px;width:190.5px;height:47.4px;background:#fff;border:1px solid #e6e6e6;border-radius:9px"></div>
<svg style="left:0;top:0" width="1024" height="455" viewBox="0 0 1024 455" font-family="Liberation Sans, sans-serif">
<path d="M745.7 136.4 H755 M745.7 140.7 H758.8 M745.7 145 H755" stroke="#6b6b6b" stroke-width="1.15" stroke-linecap="round" fill="none"/>
<path d="M778.9 134.7 C780.4 136.1 782.6 136.8 784.8 136.8 V141.2 C784.8 144.4 782.4 146.6 778.9 147.7 C775.4 146.6 773 144.4 773 141.2 V136.8 C775.2 136.8 777.4 136.1 778.9 134.7 Z" stroke="#2f9a3c" stroke-width="1.1" fill="none" stroke-linejoin="round"/><path d="M776.3 141.3 L778.2 143.2 L781.8 139.5" stroke="#2f9a3c" stroke-width="1.1" fill="none" stroke-linecap="round" stroke-linejoin="round"/>
<path d="M840.6 136.6 V135.6 C840.6 134.9 841.1 134.4 841.8 134.4 H843.7 C844.4 134.4 844.9 134.9 844.9 135.6 V136.6" stroke="#c8401d" stroke-width="1.1" fill="none"/><rect x="836.8" y="136.5" width="11.9" height="9.6" rx="1.6" fill="#c8401d"/><path d="M836.8 141.4 H848.7" stroke="#fff" stroke-width="0.8"/><rect x="841.9" y="140.3" width="1.7" height="2.2" rx="0.4" fill="#fff"/>
<g fill="none" stroke="#6b6b6b" stroke-width="0.95"><circle cx="868.6" cy="141.1" r="6.4"/><ellipse cx="868.6" cy="141.1" rx="2.9" ry="6.4"/><path d="M862.5 139 H874.7 M862.5 143.2 H874.7"/></g>
<path d="M930.6 135.5 H927.5 C926 135.5 924.9 136.6 924.9 138.1 V144 C924.9 145.5 926 146.6 927.5 146.6 H933.4 C934.9 146.6 936 145.5 936 144 V140.9" stroke="#fff" stroke-width="1.1" fill="none" stroke-linecap="round"/><path d="M929.4 141.9 L936.5 134.8" stroke="#fff" stroke-width="1.15" stroke-linecap="round"/>
<circle cx="957.5" cy="141" r="0.95" fill="#333"/><circle cx="961.7" cy="141" r="0.95" fill="#333"/><circle cx="965.9" cy="141" r="0.95" fill="#333"/>
<path d="M989.6 136.4 L999.6 146.3 M999.6 136.4 L989.6 146.3" stroke="#3a3a3a" stroke-width="1.05" stroke-linecap="round"/>
<path d="M749.7 331.5 H762 M755.85 325.4 V337.7" stroke="#3f3f3f" stroke-width="1.1" stroke-linecap="round"/>
<path d="M779.8 328.4 H793.6 M779.8 334.7 H793.6" stroke="#c8401d" stroke-width="1.1" stroke-linecap="round"/><circle cx="788.9" cy="328.4" r="2.1" fill="#c8401d"/><circle cx="784.3" cy="334.7" r="2.1" fill="#c8401d"/>
<g fill="none" stroke="#3f3f3f" stroke-width="1.05"><path d="M815.3 327.9 V326.7 C815.3 326 815.8 325.5 816.5 325.5 H819.4 C820.1 325.5 820.6 326 820.6 326.7 V327.9"/><rect x="812.1" y="327.9" width="11.7" height="8.9" rx="1.9"/><path d="M812.1 332 H823.8"/><rect x="817.1" y="331.1" width="1.7" height="1.9" rx="0.3" fill="#3f3f3f" stroke="none"/></g>
<g fill="none" stroke="#5c5c5c" stroke-width="1.05" stroke-linecap="round"><rect x="935.6" y="325.1" width="4.7" height="8.3" rx="2.35"/><path d="M933.3 331 C933.3 337 942.6 337 942.6 331 M937.95 335.6 V337.6"/></g>
<path d="M963.4 329.9 V333.2 M966.3 327.6 V335.5 M969.2 325.2 V337.7 M972.1 327.6 V335.5 M975 329.9 V333.2" stroke="#5c5c5c" stroke-width="1.15" stroke-linecap="round" fill="none"/>
</svg>
<div class="t" style="left:775.24px;top:187.08px;font-size:16.44px;color:#1f1f1f;font-weight:bold;transform:scaleX(0.9710);">Need a creative spark?</div>
<div class="t" style="left:746.59px;top:294.82px;font-size:12.38px;color:#6b6b6b;transform:scaleX(0.9273);">Message Copilot</div>
<div class="t" style="left:959.18px;top:385.19px;font-size:11.24px;color:#242424;font-weight:bold;transform:scaleX(0.7733);">for</div>
<div class="t" style="left:955.37px;top:444.09px;font-size:11.24px;color:#bf4f1d;font-weight:bold;transform:scaleX(0.8141);">pic</div>
<div class="a" style="left:734.8px;top:353.1px;width:222px;height:120px;background:#fff;border-radius:6px;box-shadow:0 0 3px rgba(0,0,0,.22),0 2px 6px rgba(0,0,0,.12)"></div>
<div class="a" style="left:741.7px;top:356.2px;width:206px;height:52.4px;border:2px solid #161616;border-right:none;border-radius:5.5px 0 0 5.5px;background:#fff"></div>
<div class="a" style="left:941.8px;top:354px;width:8px;height:60px;background:#fff"></div>
<div class="a" style="left:949.9px;top:363.4px;width:4.6px;height:100px;background:#c6c6c6;border-radius:2.3px"></div>
<svg style="left:0;top:0" width="1" height="1"><path d="M952.2 355.8 L954.6 359.4 H949.8 Z" fill="#c6c6c6"/></svg>
<svg style="left:0;top:0" width="1024" height="455" viewBox="0 0 1024 455">
<g fill="none" stroke="#4a4a4a" stroke-width="0.95" stroke-linejoin="round"><circle cx="761.6" cy="382.4" r="6.3"/><path d="M762.6 376.2 C761.6 378.4 761.4 380.6 761.9 382.6 C763.6 384 765.6 384.6 767.7 384.4"/><rect x="754.6" y="381.3" width="5" height="5.6" rx="0.9" fill="#fff" stroke="#fff" stroke-width="2"/><rect x="755.1" y="381.6" width="4.4" height="5.2" rx="0.9" fill="#fff"/><path d="M756.4 383.6 H758.2 V385.4" stroke-width="0.75"/></g>
<g fill="none" stroke="#4a4a4a" stroke-width="0.95" stroke-linecap="round"><circle cx="761.4" cy="433.6" r="5.5"/><path d="M756.4 431.6 C751.8 434.2 753.2 436.6 758.2 435.4 C762 434.4 764.4 432.6 767.6 431.5 C770.6 430.5 770.6 433.2 766.6 435.6" /></g>
</svg>
<div class="t" style="left:781.78px;top:369.95px;font-size:11.76px;color:#242424;font-weight:bold;transform:scaleX(0.9439);">Agent mode (Frontier)</div>
<div class="t" style="left:781.79px;top:388.37px;font-size:10.2px;color:#6b6b6b;transform:scaleX(0.9755);">Allow direct edits to your present...</div>
<div class="t" style="left:781.06px;top:420.75px;font-size:11.76px;color:#242424;font-weight:bold;transform:scaleX(0.8874);">Researcher</div>
<div class="t" style="left:781.78px;top:439.17px;font-size:10.2px;color:#6b6b6b;transform:scaleX(0.9539);">Create reports using detailed anal...</div>
</body>
</html>
